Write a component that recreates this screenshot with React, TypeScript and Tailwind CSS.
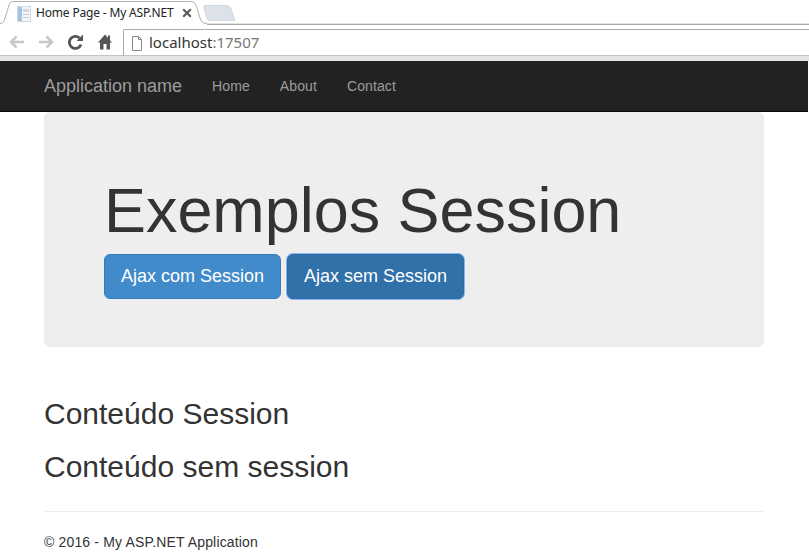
import React from "react";

function TabStrip() {
  return (
    <div className="relative h-[25px] bg-white border-b border-[#aaaaaa] shadow-[inset_0_-1px_0_#e4e4e4]">
      <svg className="absolute left-0 top-0" width="240" height="26" viewBox="0 0 240 26" fill="none">
        <path d="M0 25 V23.500 H1 C3 23.500 4 21 5 18 L9 5 C10 2.500 11 1.500 14 1.500 H190 C193 1.500 195 2.500 196 5 L200 18 C201 21.500 203 23.500 207 23.500 V25 Z" fill="#ffffff" />
        <path d="M0 23.500 H1 C3 23.500 4 21 5 18 L9 5 C10 2.500 11 1.500 14 1.500 H190 C193 1.500 195 2.500 196 5 L200 18 C201 21.500 203 23.500 207 23.500" stroke="#b0b0b0" />
        <path d="M205 5.500 H226 C229 5.500 230 7 231 9 L235 20.500 H210 C208 20.500 207 19 206.500 17 L204 8 C203.700 6.500 204 5.500 205 5.500 Z" fill="#dde1ea" stroke="#d4d8e0" />
      </svg>
      <svg className="absolute left-[16px] top-[6px]" width="16" height="16" viewBox="0 0 16 16">
        <rect x="1.500" y="0.500" width="13" height="15" fill="#f4f6f9" stroke="#d0d6de" />
        <rect x="2" y="1" width="4" height="14" fill="#a5c4e4" />
        <rect x="7" y="3" width="6" height="3" fill="#d5dae2" />
        <rect x="7" y="8" width="6" height="1" fill="#c5ccd6" />
        <rect x="7" y="11" width="6" height="1" fill="#c5ccd6" />
      </svg>
      <span className="absolute left-[36px] top-[5px] text-[12px] leading-[16px] tracking-[-0.17px] text-[#222222] whitespace-nowrap font-['Noto_Sans',sans-serif]">Home Page - My ASP.NET</span>
      <svg className="absolute left-[182px] top-[8px]" width="10" height="10" viewBox="0 0 10 10">
        <path d="M1.200 1.200 L8.800 8.800 M8.800 1.200 L1.200 8.800" stroke="#5a5a5a" strokeWidth="2.200" />
      </svg>
    </div>
  );
}

function Toolbar() {
  return (
    <div>
      <div className="flex h-[31px] items-start bg-white border-b border-[#c4c4c4]">
        <div className="flex items-center pl-[7px] pt-[9px] w-[123px]">
          <svg width="18" height="16" viewBox="0 0 18 16" fill="none" stroke="#c8c8c8" strokeWidth="2.500">
            <path d="M17 8 H4 M9.500 2.500 L4 8 L9.500 13.500" />
          </svg>
          <svg className="ml-[12px]" width="18" height="16" viewBox="0 0 18 16" fill="none" stroke="#c8c8c8" strokeWidth="2.500">
            <path d="M2 8 H15 M9.500 2.500 L15 8 L9.500 13.500" />
          </svg>
          <svg className="ml-[12px]" width="17" height="16" viewBox="0 0 17 16" fill="none">
            <path d="M14 10.500 A6 6 0 1 1 12.500 4" stroke="#555555" strokeWidth="2.800" />
            <path d="M9.500 7 H16 V0.500 Z" fill="#555555" />
          </svg>
          <svg className="ml-[13px]" width="16" height="16" viewBox="0 0 16 16" fill="#555555">
            <path d="M8 0.500 L1 8.500 H3 V15.500 H6.500 V10 H9.500 V15.500 H13 V8.500 H15 L13 6.200 V1.500 H11 V3.900 Z" />
          </svg>
        </div>
        <div className="mt-[4px] flex h-[26px] flex-1 items-center rounded-tl-[2px] border-l border-t border-[#aaaaaa] bg-white pl-[7px]">
          <svg className="mt-[1px]" width="12" height="15" viewBox="0 0 12 15" fill="none" stroke="#888888">
            <path d="M1.500 0.500 H7.500 L10.500 3.500 V14.500 H1.500 Z M7.500 0.500 V3.500 H10.500" />
          </svg>
          <span className="ml-[6px] text-[15px] leading-none font-['Noto_Sans',sans-serif] text-[#333333]">
            localhost<span className="text-[#777777]">:17507</span>
          </span>
        </div>
      </div>
      <div className="h-[5px] bg-[#e4e4e4]" />
    </div>
  );
}

export default function App() {
  return (
    <div className="h-[560px] w-[809px] overflow-hidden bg-white font-['Liberation_Sans',Arial,sans-serif] text-[#333333]">
      <TabStrip />
      <Toolbar />
      <nav className="flex h-[51px] items-center border-b border-[#080808] bg-[#222222] pl-[44px] mr-px">
        <span className="text-[18px] text-[#9d9d9d]">Application name</span>
        <div className="ml-[30px] flex gap-[30px] text-[14px] tracking-[0.1px] text-[#9d9d9d]">
          <span>Home</span>
          <span>About</span>
          <span>Contact</span>
        </div>
      </nav>
      <main className="mx-[44px] w-[720px]">
        <section className="h-[235px] rounded-[6px] bg-[#eeeeee] pl-[60px] pt-[64px]">
          <h1 className="text-[62.900px] leading-[69px] text-[#333333]">Exemplos Session</h1>
          <div className="mt-[9px] flex gap-[6px]">
            <button className="h-[45px] w-[177px] rounded-[6px] border border-[#357ebd] bg-[#428bca] text-[18px] text-white">Ajax com Session</button>
            <button className="h-[45px] w-[177px] rounded-[6px] border border-[#2d6ca2] bg-[#3071a9] text-[18px] text-white shadow-[0_0_0_1px_#8ab4f5]">Ajax sem Session</button>
          </div>
        </section>
        <h2 className="mt-[50px] text-[30px] leading-[33px] text-[#333333]">Conteúdo Session</h2>
        <h2 className="mt-[20px] text-[30px] leading-[33px] text-[#333333]">Conteúdo sem session</h2>
        <hr className="mt-[28px] border-t border-[#eeeeee]" />
        <p className="mt-[20px] text-[14px] leading-[20px] tracking-[0.16px] text-[#333333]">© 2016 - My ASP.NET Application</p>
      </main>
    </div>
  );
}
